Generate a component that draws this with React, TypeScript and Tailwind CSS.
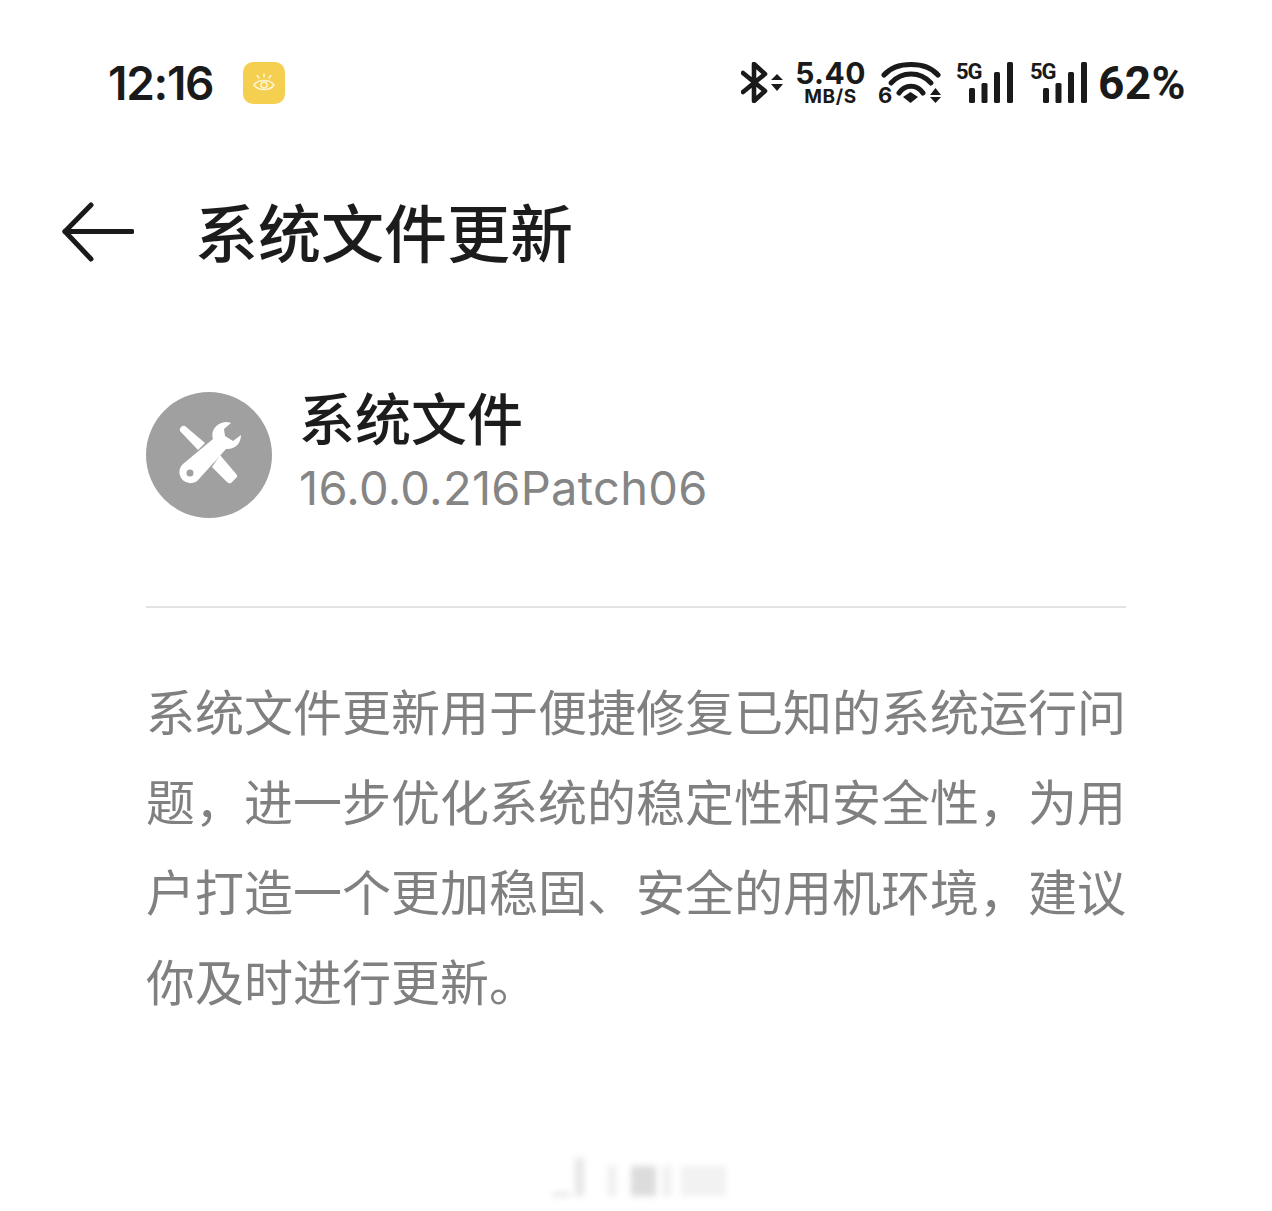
import { FC } from 'react';

const Signal: FC = () => (
    <div className="relative w-[55px] h-[41px]">
        <span className="absolute left-[-2px] top-[-3px] text-[22px] leading-[26px] font-bold tracking-[-1px] text-[#1a1a1a] font-['Roboto',sans-serif]">5G</span>
        <svg width="55" height="41" viewBox="0 0 55 41" className="absolute left-0 top-0" fill="#1a1a1a">
            <rect x="11" y="26" width="6" height="15" rx="1.5" />
            <rect x="23.5" y="21" width="6" height="20" rx="1.5" />
            <rect x="36" y="10" width="6" height="31" rx="1.5" />
            <rect x="49" y="0" width="6" height="41" rx="1.5" />
        </svg>
    </div>
);

const StatusBar: FC = () => (
    <div className="flex items-start justify-between pl-[108px] pr-[86px] pt-[62px] h-[108px]">
        <div className="flex items-center gap-[30px] mt-[-1px]">
            <span className="text-[46px] leading-[44px] font-semibold tracking-[-1.3px] text-[#1a1a1a]">12:16</span>
            <div className="w-[42px] h-[42px] rounded-[10px] bg-[#f5cf4f] flex items-center justify-center">
                <svg width="24" height="22" viewBox="0 0 24 22" fill="none" stroke="#fdf3cf" strokeWidth="1.6" strokeLinecap="round">
                    <path d="M2 13 C6 7 18 7 22 13 C18 19 6 19 2 13 Z" />
                    <circle cx="12" cy="13" r="3" />
                    <path d="M12 2 V5 M5 3.5 L7 6 M19 3.5 L17 6" />
                </svg>
            </div>
        </div>
        <div className="flex items-start text-[#1a1a1a]">
            <svg width="42" height="41" viewBox="0 0 42 41" fill="none">
                <path d="M2 11 L24 29 L13 39 V2 L24 12 L2 30" stroke="#1a1a1a" strokeWidth="4.6" strokeLinejoin="round" strokeLinecap="round" />
                <path d="M30 18 L36 12 L42 18 Z M30 22 H42 L36 29 Z" fill="#1a1a1a" />
            </svg>
            <div className="flex flex-col items-center w-[69px] ml-[13px] mt-[-2px]">
                <span className="text-[30px] leading-[27px] font-bold tracking-[0.4px]">5.40</span>
                <span className="mt-[2px] text-[19px] leading-[16px] font-bold tracking-[0.6px]">MB/S</span>
            </div>
            <div className="relative w-[63px] h-[41px] ml-[13px]">
                <svg width="63" height="41" viewBox="0 0 63 41" fill="none" stroke="#1a1a1a" strokeWidth="5" strokeLinecap="round" className="absolute left-0 top-0">
                    <path d="M6 13 C18 -1 48 -1 60 13" />
                    <path d="M13 21 C24 9 42 9 53 21" />
                    <path d="M21 31 C27 22 39 22 45 31" />
                    <path d="M25 35 L32.5 30 L40 35 L32.5 41 Z" fill="#1a1a1a" stroke="none" />
                    <path d="M52 33 L57.5 26 L63 33 Z M52 35 H63 L57.5 41 Z" fill="#1a1a1a" stroke="none" />
                </svg>
                <span className="absolute left-0 bottom-[-4px] text-[22px] leading-[24px] font-bold">6</span>
            </div>
            <div className="ml-[17px]">
                <Signal />
            </div>
            <div className="ml-[19px]">
                <Signal />
            </div>
            <span className="w-[88px] ml-[11px] mt-[-1px] text-[46px] leading-[44px] font-bold tracking-[0.4px] font-['Roboto',sans-serif] whitespace-nowrap">62%</span>
        </div>
    </div>
);

const Header: FC = () => (
    <div className="flex items-center pl-[62px] mt-[64px] h-[120px]">
        <svg width="72" height="60" viewBox="0 0 72 60" fill="none" stroke="#1a1a1a" strokeWidth="5" strokeLinecap="round" strokeLinejoin="round">
            <path d="M29 3 L3 29.5 L29 57" />
            <path d="M3 29.5 H70" />
        </svg>
        <h1 className="ml-[61px] mt-[4px] text-[63px] leading-[80px] font-medium text-[#1c1c1c]">系统文件更新</h1>
    </div>
);

const AppInfo: FC = () => (
    <div className="flex items-center mt-[100px]">
        <div className="w-[126px] h-[126px] rounded-full bg-[#a0a0a0]">
            <svg width="126" height="126" viewBox="0 0 126 126" fill="#fff">
                <path d="M34 39 Q33 37 35 35 Q37 33 39 34 L59 51 L52 58 Z" />
                <path d="M74 63 L91 83 Q92 85 90 86 L85 91 Q83 92 81 90 L66 75 Z" />
                <path fillRule="evenodd" d="M85 31 C78 28 70 32 67 39 C66 42 66 44 67 47 L37 72 A11 11 0 1 0 53 87 L80 57 C88 58 95 52 95 43 L87 49 L79 44 L78 37 Z M44 77.5 A3.5 3.5 0 1 0 44 84.5 A3.5 3.5 0 1 0 44 77.5 Z" />
            </svg>
        </div>
        <div className="ml-[27px] flex flex-col mt-[-7px]">
            <span className="text-[56px] leading-[66px] font-medium text-[#1c1c1c]">系统文件</span>
            <span className="mt-[6px] text-[47px] leading-[58px] text-[#858585] tracking-[0.3px] font-['Inter',sans-serif]">16.0.0.216Patch06</span>
        </div>
    </div>
);

// blurred site watermark at the bottom of the screenshot
const Watermark: FC = () => (
    <div className="flex items-end mt-[131px] ml-[552px] h-[40px] blur-[3px]">
        <div className="w-[18px] h-[3px] bg-[#dddddd]" />
        <div className="w-[9px] h-[38px] bg-[#e6e6e6] ml-[5px]" />
        <div className="w-[8px] h-[30px] bg-[#eeeeee] ml-[24px]" />
        <div className="w-[25px] h-[30px] bg-[#dcdcdc] ml-[15px]" />
        <div className="w-[8px] h-[30px] bg-[#eeeeee] ml-[7px]" />
        <div className="w-[45px] h-[30px] bg-[#f2f2f2] ml-[10px]" />
    </div>
);

export default function App() {
    return (
        <div className="w-[1272px] h-[1211px] bg-white overflow-hidden font-['Inter','Noto_Sans_CJK_SC',sans-serif]">
            <StatusBar />
            <Header />
            <div className="ml-[146px] w-[980px]">
                <AppInfo />
                <div className="h-[2px] bg-[#e3e3e3] mt-[88px]" />
                <p className="mt-[57px] text-[49px] leading-[90px] text-[#808080] font-['Noto_Sans_CJK_SC',sans-serif]">
                    系统文件更新用于便捷修复已知的系统运行问题，进一步优化系统的稳定性和安全性，为用户打造一个更加稳固、安全的用机环境，建议你及时进行更新。
                </p>
            </div>
            <Watermark />
        </div>
    );
}
